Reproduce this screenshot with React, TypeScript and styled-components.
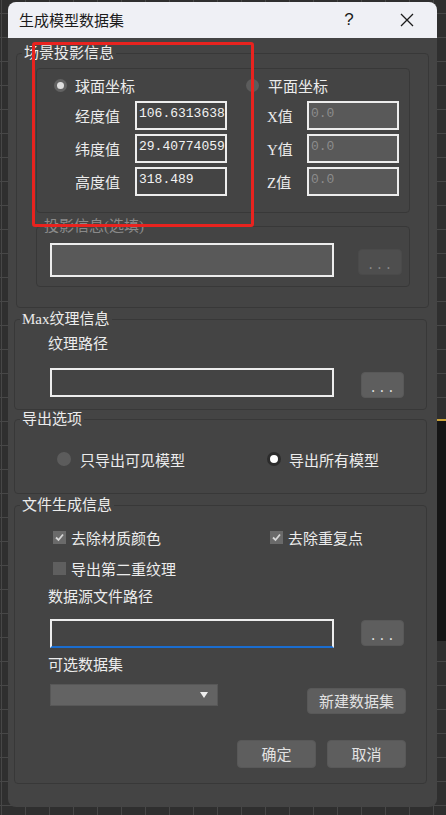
import React from "react";
import styled, { createGlobalStyle } from "styled-components";

const UI_FONT = `"Liberation Serif", "Noto Sans CJK SC", serif`;
const MONO_FONT = `"Liberation Mono", "Noto Sans CJK SC", monospace`;

const GlobalStyle = createGlobalStyle`
  html, body { margin: 0; padding: 0; }
  body {
    width: 446px;
    height: 815px;
    overflow: hidden;
    background:
      linear-gradient(#c9a23a, #c9a23a) 437px 419px / 9px 2px no-repeat,
      linear-gradient(#151515, #151515) 437px 421px / 9px 220px no-repeat,
      linear-gradient(to right, #474747 1px, transparent 1px) 1px 0 / 24px 24px,
      linear-gradient(to bottom, #474747 1px, transparent 1px) 0 13px / 24px 24px,
      #2f2f2f;
    font-family: ${UI_FONT};
  }
`;

const Dialog = styled.div`
  position: relative;
  width: 429px;
  height: 805px;
  margin: 2px 0 0 8px;
  border-radius: 8px;
  overflow: hidden;
  background: #444444;
  display: flex;
  flex-direction: column;
`;

const TitleBar = styled.div`
  height: 36px;
  flex: none;
  display: flex;
  align-items: center;
  background: #eff0f5;
  padding-left: 11px;
`;

const Title = styled.span`
  flex: 1;
  font: 15px/20px "Noto Sans CJK SC", sans-serif;
  color: #1b1b1b;
`;

const HelpButton = styled.span`
  width: 46px;
  text-align: center;
  font: 17px/20px "Liberation Sans", sans-serif;
  color: #1b1b1b;
`;

const CloseButton = styled.span`
  width: 46px;
  height: 36px;
  margin: 0 7px 0 12px;
  display: flex;
  align-items: center;
  justify-content: center;
`;

const Body = styled.div`
  flex: 1;
  display: flex;
  flex-direction: column;
`;

const Group = styled.fieldset<{ $left: number; $right: number; $top: number }>`
  margin: ${(p) => p.$top}px ${(p) => p.$right}px 0 ${(p) => p.$left}px;
  padding: 0;
  border: 1px solid #383838;
  border-radius: 4px;
  min-inline-size: 0;
`;

const GroupBody = styled.div<{ $pad: string }>`
  padding: ${(p) => p.$pad};
  display: flex;
  flex-direction: column;
`;

const SubGroup = styled.fieldset`
  margin: 5px 0 0 0;
  padding: 0;
  border: 1px solid #383838;
  border-radius: 4px;
  min-inline-size: 0;
`;

const Legend = styled.legend<{ $dim?: boolean }>`
  margin-left: 5px;
  padding: 0 2px;
  font-size: 15px;
  line-height: 16px;
  color: ${(p) => (p.$dim ? "#8a8a8a" : "#ececec")};
`;

const CoordBox = styled.div`
  display: flex;
  border: 1px solid #383838;
  border-radius: 4px;
  padding: 6px 0 16px 17px;
`;

const CoordColumn = styled.div<{ $width?: number }>`
  display: flex;
  flex-direction: column;
  width: ${(p) => (p.$width ? `${p.$width}px` : "auto")};
`;

const RadioOption = styled.label<{ $width?: number; $gap?: number }>`
  display: flex;
  align-items: center;
  height: 20px;
  gap: ${(p) => p.$gap ?? 8}px;
  width: ${(p) => (p.$width ? `${p.$width}px` : "auto")};
  font-size: 15px;
  color: #ececec;
`;

type RadioKind = "softOn" | "off" | "on";

const Radio = styled.span<{ $kind: RadioKind; $size: number }>`
  flex: none;
  box-sizing: border-box;
  width: ${(p) => p.$size}px;
  height: ${(p) => p.$size}px;
  border-radius: 50%;
  background: ${(p) => (p.$kind === "softOn" ? "#dedede" : p.$kind === "on" ? "#ffffff" : "#5c5c5c")};
  border: ${(p) =>
    p.$kind === "softOn" ? "3px solid #626262" : p.$kind === "on" ? "3px solid #2c2c2c" : "none"};
`;

const FieldList = styled.div`
  display: flex;
  flex-direction: column;
  gap: 4px;
  margin-top: 6px;
`;

const FieldRow = styled.div`
  display: flex;
  align-items: center;
`;

const FieldLabel = styled.span<{ $w: number }>`
  margin-left: 21px;
  width: ${(p) => p.$w}px;
  font-size: 15px;
  color: #ececec;
`;

const ValueInput = styled.input<{ $disabled?: boolean }>`
  box-sizing: border-box;
  width: 92px;
  height: 29px;
  margin: 0;
  padding: 0 0 4px 2px;
  border: 2px solid #ededed;
  border-radius: 0;
  background: ${(p) => (p.$disabled ? "#595959" : "#444444")};
  color: ${(p) => (p.$disabled ? "#8c8c8c" : "#f2f2f2")};
  font: 13px/20px ${MONO_FONT};
  outline: none;
`;

const PathRow = styled.div<{ $mt?: number; $gap: number }>`
  display: flex;
  align-items: flex-start;
  gap: ${(p) => p.$gap}px;
  margin-top: ${(p) => p.$mt ?? 0}px;
`;

const PathInput = styled.input<{ $h: number; $disabled?: boolean; $focused?: boolean; $ml?: number }>`
  box-sizing: border-box;
  width: 284px;
  height: ${(p) => p.$h}px;
  margin: 0 0 0 ${(p) => p.$ml ?? 0}px;
  padding: 0 4px;
  border: 2px solid #ededed;
  border-bottom-color: ${(p) => (p.$focused ? "#1a6dd0" : "#ededed")};
  border-radius: 0;
  background: ${(p) => (p.$disabled ? "#595959" : "#444444")};
  color: #f2f2f2;
  outline: none;
  font: 13px ${MONO_FONT};
`;

const Button = styled.button<{ $w: number; $h: number; $mt?: number; $disabled?: boolean }>`
  box-sizing: border-box;
  width: ${(p) => p.$w}px;
  height: ${(p) => p.$h}px;
  margin: ${(p) => p.$mt ?? 0}px 0 0 0;
  padding: 0;
  border: 1px solid ${(p) => (p.$disabled ? "#4a4a4a" : "#585858")};
  border-radius: 4px;
  background: ${(p) => (p.$disabled ? "#4e4e4e" : "#5e5e5e")};
  color: ${(p) => (p.$disabled ? "#8a8a8a" : "#e2e2e2")};
  font: 15px/20px "Noto Sans CJK SC", sans-serif;
  display: flex;
  align-items: center;
  justify-content: center;
`;

const Dots = styled.span`
  font: 13px/13px ${MONO_FONT};
  letter-spacing: 1px;
  padding-top: 6px;
`;

const Caption = styled.div<{ $mt?: number }>`
  height: 20px;
  line-height: 20px;
  margin-top: ${(p) => p.$mt ?? 0}px;
  font-size: 15px;
  color: #ececec;
`;

const OptionsRow = styled.div`
  display: flex;
  padding-left: 9px;
`;

const CheckRow = styled.div<{ $mt?: number }>`
  display: flex;
  margin: ${(p) => p.$mt ?? 0}px 0 0 5px;
`;

const CheckOption = styled.label<{ $width?: number }>`
  display: flex;
  align-items: center;
  gap: 5px;
  height: 20px;
  width: ${(p) => (p.$width ? `${p.$width}px` : "auto")};
  font-size: 15px;
  color: #ececec;
`;

const CheckBox = styled.span<{ $on?: boolean }>`
  flex: none;
  width: 13px;
  height: 13px;
  background: ${(p) => (p.$on ? "#6a6a6a" : "#5f5f5f")};
  display: flex;
  align-items: center;
  justify-content: center;
`;

const ComboRow = styled.div`
  display: flex;
  justify-content: space-between;
  align-items: flex-start;
  margin-top: 9px;
`;

const Combo = styled.div`
  box-sizing: border-box;
  width: 168px;
  height: 22px;
  margin-left: 2px;
  background: #636363;
  border: 1px solid #575757;
  display: flex;
  align-items: center;
  justify-content: flex-end;
  padding-right: 9px;
`;

const ActionRow = styled.div`
  display: flex;
  justify-content: flex-end;
  gap: 11px;
  margin-top: 26px;
`;

const Annotation = styled.div`
  position: absolute;
  left: 24px;
  top: 40px;
  width: 222px;
  height: 185px;
  box-sizing: border-box;
  border: 3px solid #e8231f;
  border-radius: 3px;
  pointer-events: none;
`;

const CheckMark = () => (
  <svg width="11" height="11" viewBox="0 0 11 11">
    <path d="M2 5.5 L4.5 8 L9 2.5" fill="none" stroke="#d6d6d6" strokeWidth="1.8" />
  </svg>
);

const CloseIcon = () => (
  <svg width="14" height="14" viewBox="0 0 14 14">
    <path d="M1 1 L13 13 M13 1 L1 13" stroke="#1b1b1b" strokeWidth="1.3" fill="none" />
  </svg>
);

const ComboArrow = () => (
  <svg width="8" height="6" viewBox="0 0 8 6">
    <path d="M0 0 H8 L4 6 Z" fill="#eeeeee" />
  </svg>
);

export default function App() {
  return (
    <>
      <GlobalStyle />
      <Dialog>
        <TitleBar>
          <Title>生成模型数据集</Title>
          <HelpButton>?</HelpButton>
          <CloseButton>
            <CloseIcon />
          </CloseButton>
        </TitleBar>
        <Body>
          <Group $left={8} $right={8} $top={7}>
            <Legend>场景投影信息</Legend>
            <GroupBody $pad="7px 18px 20px 19px">
              <CoordBox>
                <CoordColumn $width={192}>
                  <RadioOption>
                    <Radio $kind="softOn" $size={13} />
                    球面坐标
                  </RadioOption>
                  <FieldList>
                    <FieldRow>
                      <FieldLabel $w={60}>经度值</FieldLabel>
                      <ValueInput readOnly value="106.6313638" />
                    </FieldRow>
                    <FieldRow>
                      <FieldLabel $w={60}>纬度值</FieldLabel>
                      <ValueInput readOnly value="29.40774059" />
                    </FieldRow>
                    <FieldRow>
                      <FieldLabel $w={60}>高度值</FieldLabel>
                      <ValueInput readOnly value="318.489" />
                    </FieldRow>
                  </FieldList>
                </CoordColumn>
                <CoordColumn>
                  <RadioOption $gap={9}>
                    <Radio $kind="off" $size={13} />
                    平面坐标
                  </RadioOption>
                  <FieldList>
                    <FieldRow>
                      <FieldLabel $w={40}>X值</FieldLabel>
                      <ValueInput readOnly $disabled value="0.0" />
                    </FieldRow>
                    <FieldRow>
                      <FieldLabel $w={40}>Y值</FieldLabel>
                      <ValueInput readOnly $disabled value="0.0" />
                    </FieldRow>
                    <FieldRow>
                      <FieldLabel $w={40}>Z值</FieldLabel>
                      <ValueInput readOnly $disabled value="0.0" />
                    </FieldRow>
                  </FieldList>
                </CoordColumn>
              </CoordBox>
              <SubGroup>
                <Legend $dim>投影信息(选填)</Legend>
                <GroupBody $pad="9px 7px 9px 13px">
                  <PathRow $gap={24}>
                    <PathInput readOnly $h={34} $disabled />
                    <Button $w={44} $h={26} $mt={6} $disabled>
                      <Dots>...</Dots>
                    </Button>
                  </PathRow>
                </GroupBody>
              </SubGroup>
            </GroupBody>
          </Group>

          <Group $left={6} $right={10} $top={3}>
            <Legend>Max纹理信息</Legend>
            <GroupBody $pad="7px 20px 11px 33px">
              <Caption>纹理路径</Caption>
              <PathRow $mt={14} $gap={27}>
                <PathInput readOnly $h={29} $ml={2} />
                <Button $w={43} $h={26} $mt={4}>
                  <Dots>...</Dots>
                </Button>
              </PathRow>
            </GroupBody>
          </Group>

          <Group $left={6} $right={10} $top={1}>
            <Legend>导出选项</Legend>
            <GroupBody $pad="22px 20px 24px 33px">
              <OptionsRow>
                <RadioOption $width={210} $gap={9}>
                  <Radio $kind="off" $size={14} />
                  只导出可见模型
                </RadioOption>
                <RadioOption $gap={8}>
                  <Radio $kind="on" $size={14} />
                  导出所有模型
                </RadioOption>
              </OptionsRow>
            </GroupBody>
          </Group>

          <Group $left={6} $right={10} $top={3}>
            <Legend>文件生成信息</Legend>
            <GroupBody $pad="14px 20px 15px 33px">
              <CheckRow>
                <CheckOption $width={217}>
                  <CheckBox $on>
                    <CheckMark />
                  </CheckBox>
                  去除材质颜色
                </CheckOption>
                <CheckOption>
                  <CheckBox $on>
                    <CheckMark />
                  </CheckBox>
                  去除重复点
                </CheckOption>
              </CheckRow>
              <CheckRow $mt={11}>
                <CheckOption>
                  <CheckBox />
                  导出第二重纹理
                </CheckOption>
              </CheckRow>
              <Caption $mt={9}>数据源文件路径</Caption>
              <PathRow $mt={12} $gap={27}>
                <PathInput readOnly $h={29} $ml={2} $focused />
                <Button $w={43} $h={26} $mt={1}>
                  <Dots>...</Dots>
                </Button>
              </PathRow>
              <Caption $mt={7}>可选数据集</Caption>
              <ComboRow>
                <Combo>
                  <ComboArrow />
                </Combo>
                <Button $w={99} $h={26} $mt={4}>
                  新建数据集
                </Button>
              </ComboRow>
              <ActionRow>
                <Button $w={79} $h={28}>
                  确定
                </Button>
                <Button $w={79} $h={28}>
                  取消
                </Button>
              </ActionRow>
            </GroupBody>
          </Group>
        </Body>
        <Annotation />
      </Dialog>
    </>
  );
}
